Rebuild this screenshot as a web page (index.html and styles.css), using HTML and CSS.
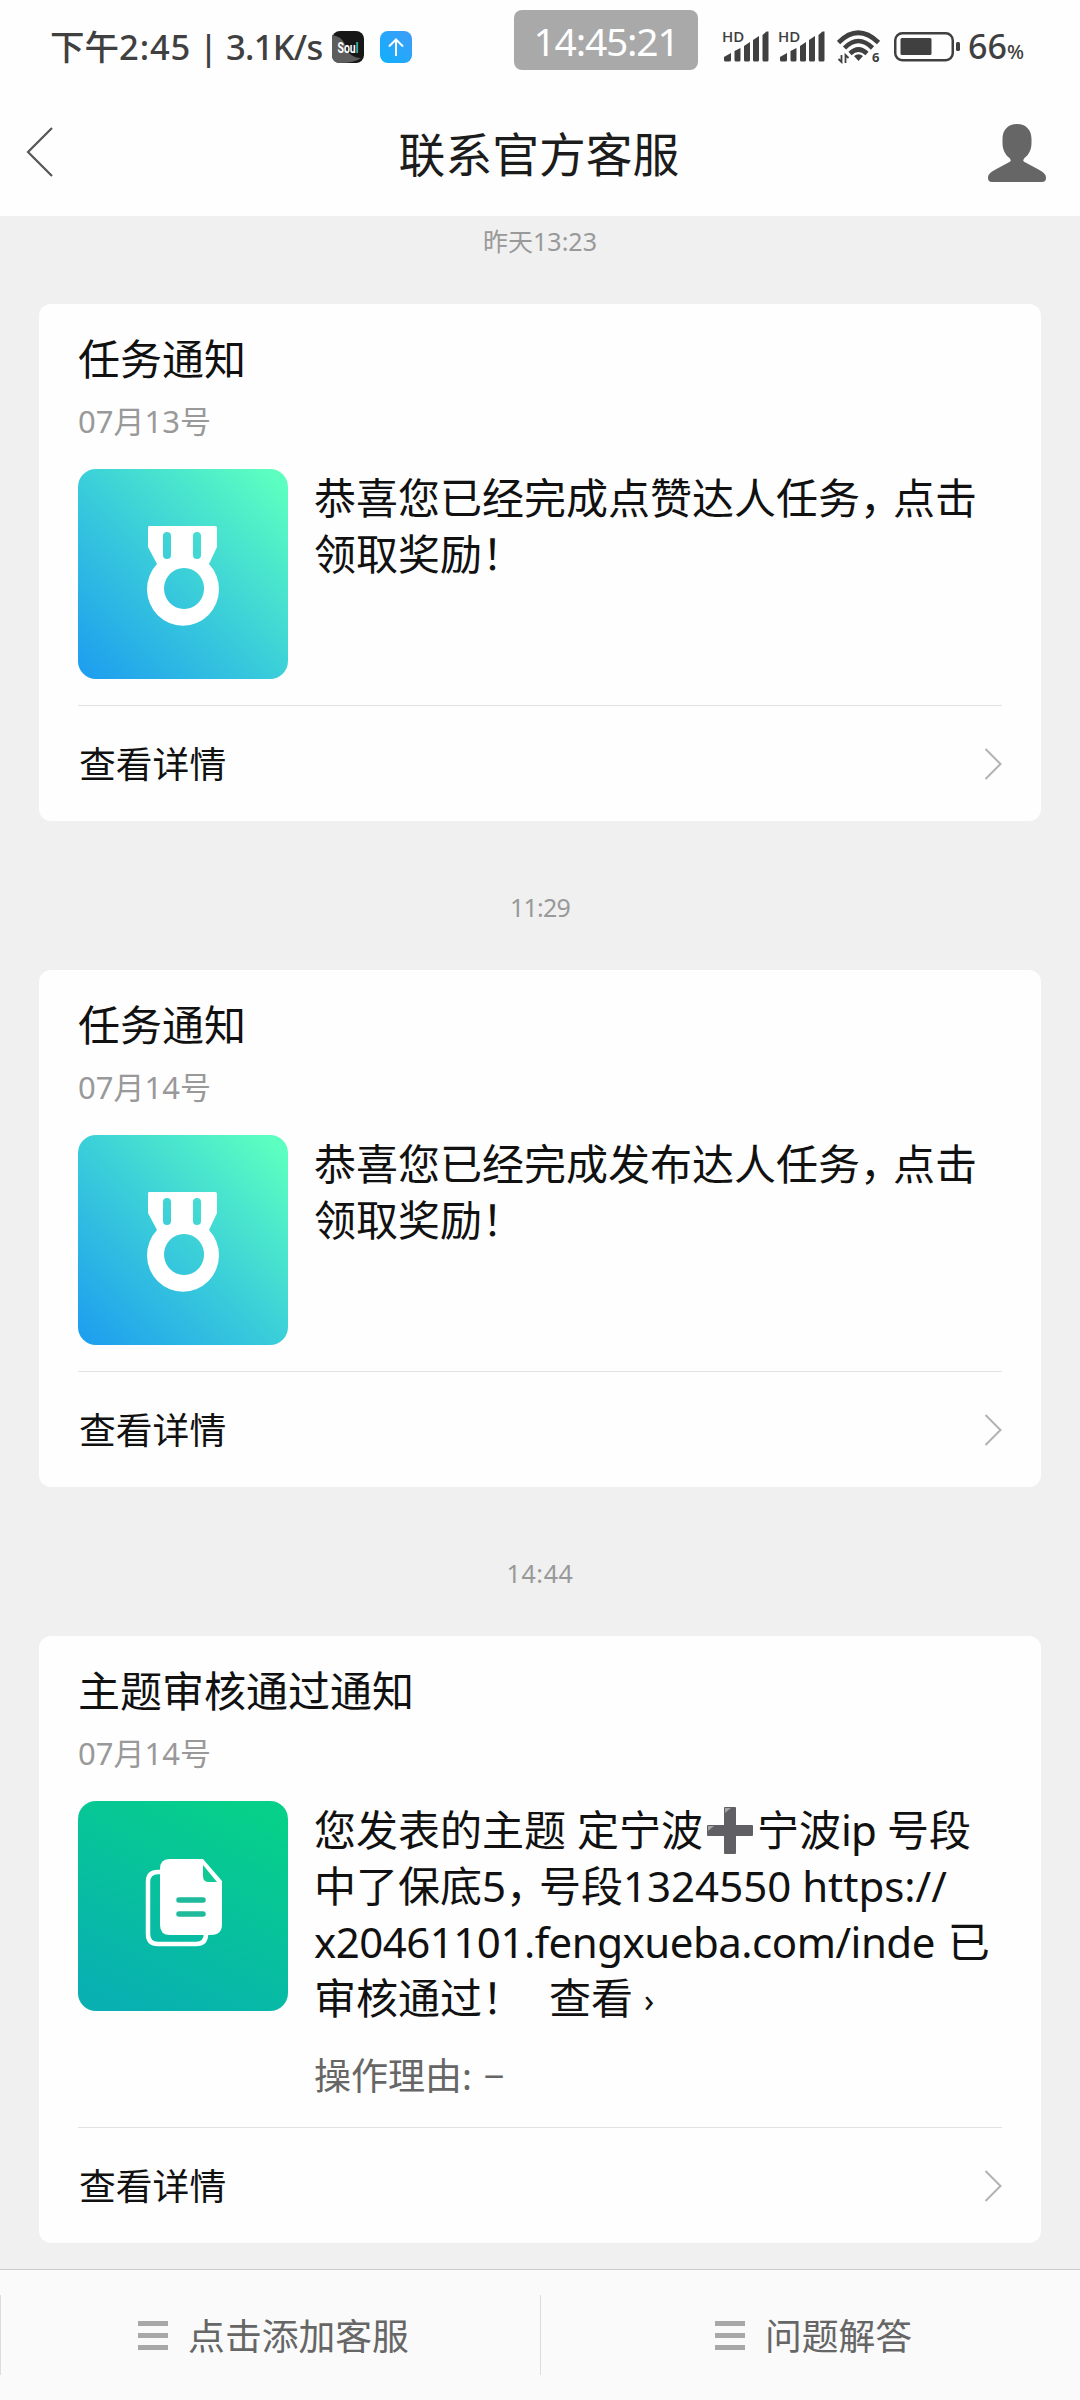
FILE: index.html
```html
<!DOCTYPE html>
<html lang="zh-CN">
<head>
<meta charset="utf-8">
<title>联系官方客服</title>
<link rel="stylesheet" href="styles.css">
</head>
<body>
<svg width="0" height="0" class="defs" aria-hidden="true">
  <defs>
    <linearGradient id="medalBg" x1="0" y1="1" x2="1" y2="0">
      <stop offset="0.04" stop-color="#1fa0ee"/><stop offset="0.5" stop-color="#3bcfd9"/><stop offset="0.95" stop-color="#5cffc0"/>
    </linearGradient>
    <linearGradient id="docBg" x1="0.25" y1="1" x2="0.75" y2="0">
      <stop offset="0" stop-color="#08b0b2"/><stop offset="1" stop-color="#06d089"/>
    </linearGradient>
    <linearGradient id="upBg" x1="0" y1="1" x2="1" y2="0">
      <stop offset="0" stop-color="#0fb0fd"/><stop offset="1" stop-color="#3f9cf8"/>
    </linearGradient>
  </defs>
  <symbol id="signal" viewBox="0 0 48 32">
    <path d="M2 29v-3l7-4v7q0 1.500-1.500 1.500h-4Q2 30.500 2 29zM12.500 29v-9l6-3v12q0 1.500-1.500 1.500h-3q-1.500 0-1.500-1.500zM22 29V15l6-4v18q0 1.500-1.500 1.500h-3Q22 30.500 22 29zM31 29V9l6-4v24q0 1.500-1.500 1.500h-3Q31 30.500 31 29zM40.500 29V4l4-3.500h2V29q0 1.500-1.500 1.500h-3q-1.500 0-1.500-1.500z" fill="#404040"/>
  </symbol>
  <symbol id="medal" viewBox="0 0 210 210">
    <rect width="210" height="210" rx="18" fill="url(#medalBg)"/>
    <path fill-rule="evenodd" fill="#fff" d="M71 57h66q2 0 2 2v19l-8 17a36 36.500 0 1 1-52 0l-9-17V59q0-2 1-2zM89 63q-4 0-4 4v19q0 4 4 4t4-4V67q0-4-4-4zM119 63q-4 0-4 4v19q0 4 4 4t4-4V67q0-4-4-4zM106 99a20 20.500 0 1 0 .1 0z"/>
  </symbol>
  <symbol id="chevron" viewBox="0 0 20 34">
    <path d="M3.500 2L18.500 17 3.500 32" fill="none" stroke="#b2b2b2" stroke-width="2"/>
  </symbol>
  <symbol id="menu" viewBox="0 0 30 29">
    <path d="M0 2.500h30M0 14.500h30M0 26.500h30" stroke="#a8a8a8" stroke-width="5"/>
  </symbol>
</svg>
<div class="screen">
  <header class="top">
    <div class="status">
      <span class="status-text">下午<span class="hour">2:45 |</span> <span class="speed">3.1K/s</span></span>
      <svg class="soul" viewBox="0 0 32 32"><rect width="32" height="32" rx="8" fill="#171717"/><path d="M0 4q13 2 14 15 8 9 15 8-6 5-21 5Q0 32 0 24z" fill="#5d5d5d"/><text x="5.500" y="21.500" class="soul-text" textLength="21" lengthAdjust="spacingAndGlyphs">Sou<tspan fill="#31c7bb">l</tspan></text></svg>
      <svg class="upload" viewBox="0 0 32 32"><rect width="32" height="32" rx="8" fill="url(#upBg)"/><path d="M16 25V8.500M9 15.500l7-7 7 7" fill="none" stroke="#fff" stroke-width="2"/></svg>
      <span class="clock">14:45:21</span>
      <span class="sim"><svg><use href="#signal"/></svg><b>HD</b></span>
      <span class="sim second"><svg><use href="#signal"/></svg><b>HD</b></span>
      <svg class="wifi" viewBox="0 0 43 34">
        <g fill="none" stroke="#404040" stroke-width="4.600"><path d="M1.500 12.500Q21 -7 41.500 12.500"/><path d="M7.500 18Q21.300 4 35.500 18"/><path d="M13 23.500q8.500-8 17 0"/></g>
        <path d="M21.500 31l-4.500-5q4.500-3.500 9 0z" fill="#404040"/>
        <path d="M4.500 25v7l-3-3M8.500 33v-8l3 3" fill="none" stroke="#404040" stroke-width="1.800"/>
        <text x="35" y="32" class="wifi-gen">6</text>
      </svg>
      <svg class="battery" viewBox="0 0 67 30"><rect x="1.250" y="1.250" width="57.500" height="27" rx="7" fill="none" stroke="#404040" stroke-width="2.500"/><rect x="6.500" y="6" width="31" height="17" rx="1.500" fill="#404040"/><rect x="62" y="10" width="4" height="9" rx="1.500" fill="#404040"/></svg>
      <span class="level">66<small>%</small></span>
    </div>
    <nav class="nav">
      <svg class="back" viewBox="0 0 28 50"><path d="M26 1L2 25l24 24" fill="none" stroke="#555" stroke-width="2.200"/></svg>
      <h1>联系官方客服</h1>
      <svg class="user" viewBox="0 0 58 58"><path d="M29 0C38 0 43.500 6 43.500 15v4c0 7-3 12-7 15-2 3-1.500 3 1 4.500l13 7C55 48 58 50 58 54q0 4-4 4H4q-4 0-4-4c0-4 3-6 7.500-8.500l13-7c2.500-1.500 3-1.500 1-4.500-4-3-7-8-7-15v-4C14.500 6 20 0 29 0z" fill="#666"/></svg>
    </nav>
  </header>

  <main class="feed">
    <time>昨天13:23</time>
    <article class="card">
      <h2>任务通知</h2>
      <p class="date">07月13号</p>
      <div class="body">
        <svg class="thumb"><use href="#medal"/></svg>
        <div class="message">
          <p>恭喜您已经完成点赞达人任务<i>，</i>点击</p>
          <p>领取奖励！</p>
        </div>
      </div>
      <footer>查看详情<svg class="chevron"><use href="#chevron"/></svg></footer>
    </article>

    <time class="tight">11:29</time>
    <article class="card">
      <h2>任务通知</h2>
      <p class="date">07月14号</p>
      <div class="body">
        <svg class="thumb"><use href="#medal"/></svg>
        <div class="message">
          <p>恭喜您已经完成发布达人任务<i>，</i>点击</p>
          <p>领取奖励！</p>
        </div>
      </div>
      <footer>查看详情<svg class="chevron"><use href="#chevron"/></svg></footer>
    </article>

    <time class="loose">14:44</time>
    <article class="card">
      <h2>主题审核通过通知</h2>
      <p class="date">07月14号</p>
      <div class="body">
        <svg class="thumb" viewBox="0 0 210 210">
          <rect width="210" height="210" rx="18" fill="url(#docBg)"/>
          <path d="M82 71h-2q-10 0-10 10v52q0 10 10 10h38q10 0 10-10" fill="none" stroke="#fff" stroke-width="4.500"/>
          <path d="M91 58h34l19 22v43q0 11-11 11H92q-10 0-10-10V68q0-10 9-10z" fill="#fff"/>
          <path d="M125 64v11q0 6 6 6h8z" fill="#12c894"/>
          <path d="M101 99h24M101 113h24" stroke="#1fba9b" stroke-width="5.500" stroke-linecap="round"/>
        </svg>
        <div class="message">
          <p>您发表的主题 定宁波<svg class="plus" viewBox="0 0 46 47"><path d="M17 1q0-1 1-1h10q1 0 1 1v17h16q1 0 1 1v9q0 1-1 1H29v17q0 1-1 1H18q-1 0-1-1V29H1q-1 0-1-1v-9q0-1 1-1h16z" fill="#606064"/><path d="M18 6V1h6zM1 24v-5h6z" fill="#a5a5a8"/></svg>宁波<span class="ip">ip</span> 号段</p>
          <p>中了保底5<i>，</i>号段1324550 https://</p>
          <p><span class="url">x20461101.fengxueba.com/inde</span> 已</p>
          <p>审核通过！<span class="look">查看 <small>›</small></span></p>
          <p class="reason">操作理由: <span class="dash">−</span></p>
        </div>
      </div>
      <footer>查看详情<svg class="chevron"><use href="#chevron"/></svg></footer>
    </article>
  </main>

  <div class="menu">
    <div class="menu-item"><svg><use href="#menu"/></svg>点击添加客服</div>
    <div class="menu-item"><svg><use href="#menu"/></svg>问题解答</div>
  </div>
</div>
</body>
</html>
```
FILE: styles.css
```css
* { box-sizing: border-box; }

body {
  margin: 0;
  background: #f0f0f0;
  color: #111;
  font-family: "Noto Sans", "Noto Sans CJK SC", sans-serif;
}

h1, h2, p { margin: 0; font-weight: 400; }
svg { display: block; flex: none; }
.defs { position: absolute; }

.screen {
  width: 1080px;
  height: 2400px;
  display: flex;
  flex-direction: column;
  overflow: hidden;
}

.top { height: 216px; background: #fefefe; }

/* status bar */
.status {
  height: 94px;
  padding-left: 50px;
  display: flex;
  align-items: center;
  color: #404040;
}
.status-text {
  width: 282px;
  margin-top: -4px;
  font-size: 34.5px;
  font-weight: 500;
  white-space: nowrap;
  word-spacing: -2px;
}
.hour { letter-spacing: 0.9px; }
.speed { letter-spacing: -0.7px; }
.soul, .upload { width: 32px; height: 32px; }
.upload { margin-left: 16px; }
.soul-text { font: bold 15px "Roboto", sans-serif; fill: #fff; }
.clock {
  width: 184px;
  height: 60px;
  margin: -14px 0 0 102px;
  display: flex;
  align-items: center;
  justify-content: center;
  border-radius: 8px;
  background: #a9a9a9;
  color: #fff;
  font-size: 39px;
  letter-spacing: -1.2px;
}
.sim { position: relative; margin-left: 24px; }
.sim svg { width: 48px; height: 32px; }
.sim b {
  position: absolute;
  left: 0;
  top: 0;
  font: 600 15px/11px "Open Sans", sans-serif;
}
.sim.second { margin-left: 8px; }
.wifi { width: 43px; height: 34px; margin-left: 11px; }
.wifi-gen { font: bold 13px "Open Sans", sans-serif; fill: #404040; }
.battery { width: 67px; height: 30px; margin-left: 14px; }
.level { margin: -2px 0 0 7px; font-size: 34px; font-weight: 500; white-space: nowrap; }
.level small { font-size: 20px; }

/* title bar */
.nav {
  height: 122px;
  padding: 0 34px 0 26px;
  display: flex;
  align-items: center;
  justify-content: space-between;
}
.back { width: 28px; height: 50px; margin-right: 36px; margin-top: -6px; }
.nav h1 { margin-top: -3px; font-size: 46.8px; line-height: 60px; color: #1c1c1c; }
.user { width: 58px; height: 58px; margin-top: -4px; }

/* notification feed */
.feed { flex: 1; padding: 0 39px; }
.feed time {
  display: block;
  padding: 69px 0 46px;
  color: #999;
  font-size: 25px;
  line-height: 34px;
  text-align: center;
}
.feed time:first-child { padding-top: 8px; }
.feed .tight { letter-spacing: -0.8px; }
.feed .loose { letter-spacing: 0.6px; }

.card {
  padding: 27px 39px 0;
  border-radius: 12px;
  background: #fefefe;
}
.card h2 { font-size: 42px; line-height: 56px; }
.date {
  margin-top: 11px;
  color: #999;
  font-size: 31px;
  line-height: 46px;
}
.body { display: flex; gap: 26px; margin-top: 25px; }
.thumb { width: 210px; height: 210px; }
.message { padding-top: 1px; font-size: 42px; }
.message p { height: 56px; line-height: 56px; white-space: nowrap; }
.message i { font-style: normal; letter-spacing: -9px; }
.plus { display: inline-block; width: 46px; height: 47px; margin: 0 4px; vertical-align: -8px; }
.ip { letter-spacing: -0.8px; }
.url { margin-right: 2px; letter-spacing: -0.5px; }
.look { margin-left: 25px; }
.look small { font-size: 33px; vertical-align: 2px; line-height: 1; }
.message .reason {
  height: 48px;
  margin-top: 26px;
  color: #666;
  font-size: 37px;
  line-height: 48px;
}
.dash { margin-left: 2px; }
.card footer {
  height: 116px;
  margin-top: 26px;
  padding: 0 0 3px 1px;
  border-top: 1px solid #e2e2e2;
  display: flex;
  align-items: center;
  justify-content: space-between;
  font-size: 36.8px;
}
.message .reason { margin-bottom: 1px; }
.chevron { width: 20px; height: 34px; margin-top: 3px; }

/* bottom menu */
.menu {
  height: 131px;
  border-top: 1px solid #ccc;
  background: #fafafa;
  display: flex;
  align-items: center;
}
.menu-item {
  flex: 1;
  height: 80px;
  padding: 0 0 3px 6px;
  border-left: 1px solid #ddd;
  display: flex;
  align-items: center;
  justify-content: center;
  gap: 20px;
  color: #666;
  font-size: 36.8px;
}
.menu-item svg { width: 30px; height: 29px; margin-top: 3px; }
```
